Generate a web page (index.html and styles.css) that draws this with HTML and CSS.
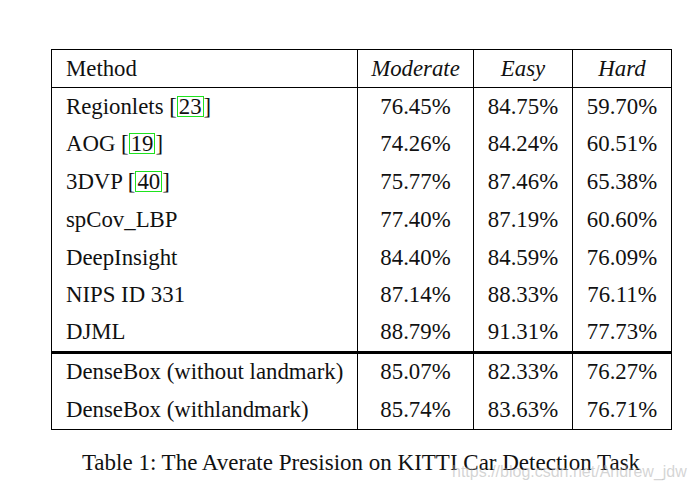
FILE: index.html
```html
<!DOCTYPE html>
<html>
<head>
<meta charset="utf-8">
<link rel="stylesheet" href="styles.css">
</head>
<body>
<div class="figure">
  <table class="results">
    <colgroup>
      <col class="c-method"><col class="c-mod"><col class="c-num"><col class="c-num">
    </colgroup>
    <thead>
      <tr><th class="method">Method</th><th>Moderate</th><th>Easy</th><th>Hard</th></tr>
    </thead>
    <tbody>
      <tr><td class="method">Regionlets [<span class="cite">23</span>]</td><td>76.45%</td><td>84.75%</td><td>59.70%</td></tr>
      <tr><td class="method">AOG [<span class="cite">19</span>]</td><td>74.26%</td><td>84.24%</td><td>60.51%</td></tr>
      <tr><td class="method">3DVP [<span class="cite">40</span>]</td><td>75.77%</td><td>87.46%</td><td>65.38%</td></tr>
      <tr><td class="method">spCov_LBP</td><td>77.40%</td><td>87.19%</td><td>60.60%</td></tr>
      <tr><td class="method">DeepInsight</td><td>84.40%</td><td>84.59%</td><td>76.09%</td></tr>
      <tr><td class="method">NIPS ID 331</td><td>87.14%</td><td>88.33%</td><td>76.11%</td></tr>
      <tr class="last"><td class="method">DJML</td><td>88.79%</td><td>91.31%</td><td>77.73%</td></tr>
      <tr class="extra"><td class="method">DenseBox (without landmark)</td><td>85.07%</td><td>82.33%</td><td>76.27%</td></tr>
      <tr class="extra"><td class="method">DenseBox (withlandmark)</td><td>85.74%</td><td>83.63%</td><td>76.71%</td></tr>
    </tbody>
  </table>
  <div class="caption">Table 1: The Averate Presision on KITTI Car Detection Task</div>
</div>
<div class="watermark">https://blog.csdn.net/Andrew_jdw</div>
</body>
</html>
```

FILE: styles.css
```css
html, body {
  margin: 0;
  padding: 0;
  background: #ffffff;
}
body {
  font-family: "Liberation Serif", "Times New Roman", serif;
  color: #111;
  width: 697px;
  height: 490px;
  position: relative;
  overflow: hidden;
}
.figure {
  padding: 49px 0 0 51px;
  width: 620px;
}
.results {
  border-collapse: collapse;
  width: 620px;
  font-size: 22.8px;
  table-layout: fixed;
}
.c-method { width: 306px; }
.c-mod { width: 116px; }
.c-num { width: 99px; }
.results th, .results td {
  border: 1.5px solid #000;
  height: 37.8px;
  padding: 0;
  text-align: center;
  font-weight: normal;
  line-height: 26px;
  box-sizing: border-box;
}
.results th {
  font-style: italic;
  height: 38px;
}
.results th.method {
  font-style: normal;
}
.results .method {
  text-align: left;
  padding-left: 14px;
}
.results tbody td {
  border-top: none;
  border-bottom: none;
}
.results tr.extra td {
  height: 38.6px;
}
.results tbody tr:last-child td {
  border-bottom: 1.5px solid #000;
}
.results tr.last td {
  border-bottom: 3px solid #000;
}
.cite {
  display: inline-block;
  border: 1px solid #1ee31e;
  line-height: 19px;
  padding: 0 1px;
}
.caption {
  margin-top: 20px;
  text-align: center;
  font-size: 23px;
  line-height: 26px;
}
.watermark {
  position: absolute;
  left: 452px;
  top: 463px;
  font-family: "Liberation Sans", Arial, sans-serif;
  font-size: 16px;
  color: rgba(170, 170, 170, 0.5);
}
```
